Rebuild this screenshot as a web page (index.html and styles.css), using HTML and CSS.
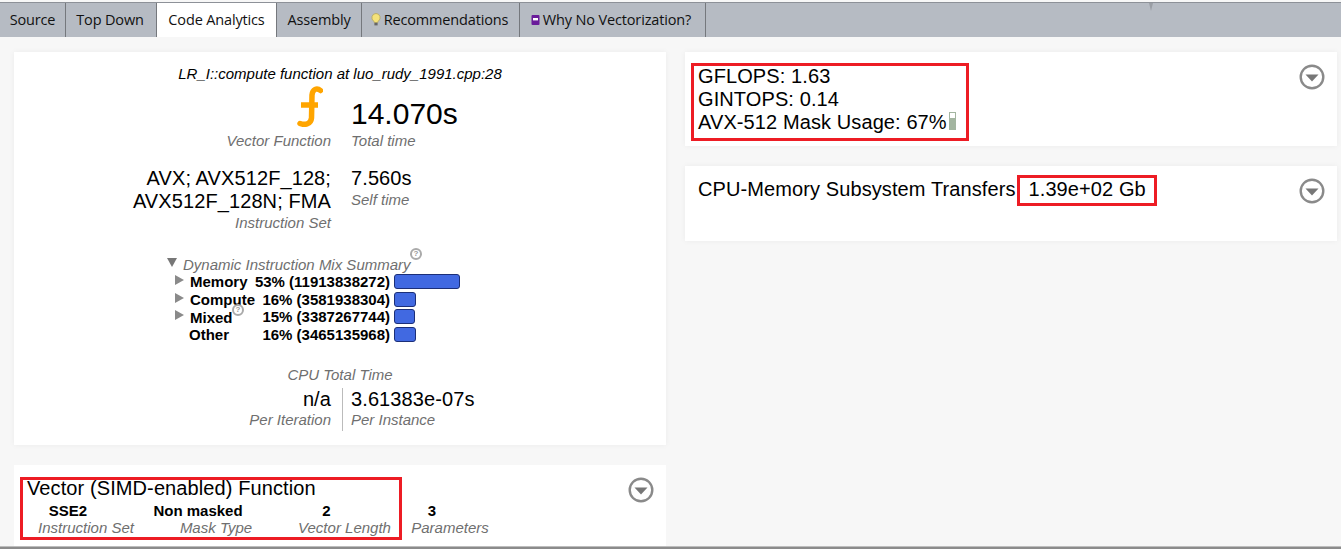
FILE: index.html
```html
<!DOCTYPE html>
<html lang="en">
<head>
<meta charset="utf-8">
<title>Code Analytics</title>
<link rel="stylesheet" href="styles.css">
</head>
<body>
<nav class="tabs">
  <div class="tab t1">Source</div>
  <div class="tab t2">Top Down</div>
  <div class="tab t3 active">Code Analytics</div>
  <div class="tab t4">Assembly</div>
  <div class="tab t5">
    <svg class="tab-icon" width="10" height="13" viewBox="0 0 10 13"><path d="M5 .5a4.2 4.2 0 0 0-2.4 7.6c.5.4.6.9.6 1.4h3.6c0-.5.1-1 .6-1.4A4.2 4.2 0 0 0 5 .5z" fill="#f4e27a" stroke="#b3a45a" stroke-width=".8"/><rect x="3.4" y="9.8" width="3.2" height="2.6" fill="#666"/></svg>
    Recommendations
  </div>
  <div class="tab t6">
    <svg class="tab-icon" width="9" height="12" viewBox="0 0 9 12"><rect x=".5" y="1" width="8" height="10" rx="1" fill="#6a1b9a"/><rect x="2" y="4" width="5" height="2.4" fill="#fff"/></svg>
    Why No Vectorization?
  </div>
  <span class="bar-notch"></span>
</nav>
<main class="main">
  <div class="col">
    <section class="card summary">
      <p class="title">LR_I::compute function at luo_rudy_1991.cpp:28</p>
      <div class="pair head-pair">
        <div class="left">
          <svg class="func-icon" width="26" height="41" viewBox="0 0 26 41"><path d="M23.5 4.5C20 1.5 15.5 3 15 9L14.5 32C14 38 8 39.5 3 37.5" fill="none" stroke="#ffa500" stroke-width="5.5" stroke-linecap="round"/><path d="M4 19H21" stroke="#ffa500" stroke-width="5.5"/></svg>
          <div class="lab">Vector Function</div>
        </div>
        <div class="right">
          <div class="big">14.070s</div>
          <div class="lab">Total time</div>
        </div>
      </div>
      <div class="pair set-pair">
        <div class="left">
          <div class="mid">AVX; AVX512F_128;<br>AVX512F_128N; FMA</div>
          <div class="lab">Instruction Set</div>
        </div>
        <div class="right">
          <div class="mid">7.560s</div>
          <div class="lab">Self time</div>
        </div>
      </div>
      <div class="mix">
        <div class="mix-head"><span class="tri-down"></span><span class="mix-title">Dynamic Instruction Mix Summary</span><span class="help help-a">?</span></div>
        <div class="mix-row"><span class="tri"></span><b class="name">Memory</b><b class="val">53% (11913838272)</b><span class="bar w-mem"></span></div>
        <div class="mix-row"><span class="tri"></span><b class="name">Compute</b><b class="val">16% (3581938304)</b><span class="bar w-cmp"></span></div>
        <div class="mix-row mixed"><span class="tri"></span><b class="name">Mixed</b><b class="val">15% (3387267744)</b><span class="bar w-mix"></span></div>
        <div class="mix-row"><span></span><b class="name other">Other</b><b class="val">16% (3465135968)</b><span class="bar w-cmp"></span></div>
        <span class="help help-b">?</span>
      </div>
      <div class="cpu-title lab">CPU Total Time</div>
      <div class="pair cpu-pair">
        <div class="left divider">
          <div class="mid">n/a</div>
          <div class="lab">Per Iteration</div>
        </div>
        <div class="right">
          <div class="mid">3.61383e-07s</div>
          <div class="lab">Per Instance</div>
        </div>
      </div>
    </section>
    <section class="card simd">
      <div class="mark simd-mark"></div>
      <svg class="chev" width="26" height="26" viewBox="0 0 26 26"><circle cx="13" cy="13" r="11.3" fill="none" stroke="#8a8a8a" stroke-width="2.4"/><path d="M6.5 10.5h13L13 17.5z" fill="#777"/></svg>
      <h2 class="heading">Vector (SIMD-enabled) Function</h2>
      <div class="params">
        <div class="param"><b>SSE2</b><span class="lab">Instruction Set</span></div>
        <div class="param"><b>Non masked</b><span class="lab">Mask Type</span></div>
        <div class="param"><b>2</b><span class="lab">Vector Length</span></div>
        <div class="param"><b>3</b><span class="lab">Parameters</span></div>
      </div>
    </section>
  </div>
  <div class="col">
    <section class="card metrics">
      <svg class="chev" width="26" height="26" viewBox="0 0 26 26"><circle cx="13" cy="13" r="11.3" fill="none" stroke="#8a8a8a" stroke-width="2.4"/><path d="M6.5 10.5h13L13 17.5z" fill="#777"/></svg>
      <div class="red-box stats">
        <div>GFLOPS: 1.63</div>
        <div>GINTOPS: 0.14</div>
        <div class="mask-line">AVX-512 Mask Usage: 67%<span class="gauge"><span class="gauge-empty"></span></span></div>
      </div>
    </section>
    <section class="card transfers">
      <svg class="chev" width="26" height="26" viewBox="0 0 26 26"><circle cx="13" cy="13" r="11.3" fill="none" stroke="#8a8a8a" stroke-width="2.4"/><path d="M6.5 10.5h13L13 17.5z" fill="#777"/></svg>
      <span class="tr-label">CPU-Memory Subsystem Transfers</span><span class="red-box tr-val">1.39e+02 Gb</span>
    </section>
  </div>
</main>
<div class="bottom-line"></div>
</body>
</html>
```
FILE: styles.css
```css
* { box-sizing: border-box; }
html, body { margin: 0; height: 549px; overflow: hidden; }
body {
  background: #f7f7f7;
  color: #000;
  font-family: "Liberation Sans", Arial, sans-serif;
  display: flex;
  flex-direction: column;
  padding-top: 2px;
}
.tabs {
  position: relative;
  height: 35px;
  flex: none;
  display: flex;
  background: #b6bbc3;
  border-top: 1px solid #8d9198;
  font-family: "Open Sans", sans-serif;
  font-size: 14.5px;
  letter-spacing: -.15px;
}
.bar-notch { position: absolute; left: 1149px; top: 0; border: 2px solid transparent; border-top: 8px solid #9a9ea5; border-bottom: 0; }
.tab {
  display: flex;
  align-items: center;
  justify-content: center;
  gap: 3px;
  border-right: 1px solid #75787d;
  height: 34px;
  color: #111;
  padding-bottom: 1px;
}
.t1 { width: 66px; }
.t2 { width: 91px; padding-right: 2px; }
.t3 { width: 120px; }
.t4 { width: 85px; }
.t5 { width: 158px; padding-right: 2px; }
.t6 { width: 186px; padding-right: 3px; }
.active { background: #fff; }
.main {
  flex: 1;
  display: grid;
  grid-template-columns: 652px 652px;
  column-gap: 19px;
  padding: 15px 0 0 14px;
  min-height: 0;
}
.col { display: flex; flex-direction: column; gap: 20px; min-height: 0; }
.card {
  position: relative;
  background: #fff;
  box-shadow: 0 0 6px rgba(0, 0, 0, .05);
}
.chev { position: absolute; right: 12px; top: 12px; }
.lab { font-size: 15px; line-height: 17px; font-style: italic; color: #6f6f6f; }

.summary { height: 393px; padding-top: 13px; flex: none; }
.title { margin: 0; font-size: 15px; line-height: 17px; font-style: italic; text-align: center; }
.pair { display: grid; grid-template-columns: 317px 1fr; column-gap: 20px; }
.left { text-align: right; }
.big { font-size: 30px; line-height: 34px; }
.mid { font-size: 20px; line-height: 23px; letter-spacing: .1px; }
.head-pair { margin-top: 4px; height: 74px; }
.func-icon { display: block; margin: 0 8px 5px auto; }
.head-pair .right { padding-top: 11px; }
.head-pair .right .lab { margin-top: 1px; }
.set-pair { margin-top: 7px; }
.set-pair .lab { margin-top: 1px; }
.mix { margin-top: 25px; margin-left: 153px; position: relative; width: 300px; }
.mix-head { display: flex; align-items: center; height: 17px; }
.tri-down { width: 0; height: 0; border: 5px solid transparent; border-top: 9px solid #777; border-bottom: 0; margin-right: 6px; margin-top: -5px; }
.mix-title { font-size: 15px; font-style: italic; color: #6f6f6f; }
.help {
  position: absolute;
  width: 12px; height: 12px;
  border-radius: 50%;
  border: 2px solid #aaa;
  color: #999;
  font: bold 8px/8px "Liberation Sans", sans-serif;
  text-align: center;
  background: rgba(255, 255, 255, .6);
}
.help-a { left: 243px; top: -8px; }
.help-b { left: 65px; top: 48px; }
.mix-row {
  display: grid;
  grid-template-columns: 9px 58px 136px auto;
  column-gap: 6px;
  align-items: center;
  height: 17.5px;
  margin-left: 8px;
  font-size: 15px;
  line-height: 17px;
  white-space: nowrap;
  justify-content: start;
}
.mix-row .tri { width: 0; height: 0; border: 5px solid transparent; border-left: 9px solid #8a8a8a; border-right: 0; margin-top: -3px; }
.name { position: relative; }
.mixed .name { top: 1px; }
.other { left: -1px; }
.val { text-align: right; }
.bar { display: block; height: 15px; background: #4169e1; border: 1px solid #1c2f78; border-radius: 3px; margin-left: -2px; }
.w-mem { width: 66px; }
.w-cmp { width: 22px; }
.w-mix { width: 21px; }
.cpu-title { margin-top: 23px; text-align: center; }
.cpu-pair { grid-template-columns: 329px 1fr; column-gap: 0; margin-top: 5px; }
.divider { border-right: 1px solid #bbb; padding-right: 11px; height: 43px; }
.cpu-pair .right { padding-left: 8px; }

.simd { flex: 1; padding: 12px 0 0 13px; box-shadow: none; overflow: hidden; }
.heading { margin: 0; font-size: 20px; font-weight: 400; line-height: 23px; letter-spacing: .1px; }
.params { display: grid; grid-template-columns: 96px 118px 139px 98px; margin-top: 2px; margin-left: 11px; }
.param { display: flex; flex-direction: column; align-items: center; white-space: nowrap; }
.param:nth-child(2), .param:nth-child(3) { margin-left: 46px; }
.param:nth-child(4) { margin-left: 20px; }
.param b { font-size: 15px; line-height: 17px; transform: translateX(-18px); }
.mark { position: absolute; border: 3px solid #ed1c24; }
.simd-mark { left: 6px; top: 12px; width: 382px; height: 63px; }

.red-box { border: 3px solid #ed1c24; }
.metrics { height: 94px; padding: 11px 0 0 6px; flex: none; }
.stats { width: 278px; height: 78px; padding: 0 0 0 4px; font-size: 20px; line-height: 23px; letter-spacing: .1px; }
.stats > div:first-child { margin-top: -1px; }
.mask-line { display: flex; align-items: center; }
.gauge { display: block; width: 7px; height: 18px; margin-left: 2px; margin-top: -4px; background: #a3b5a0; position: relative; }
.gauge-empty { display: block; position: absolute; left: 1px; top: 1px; width: 5px; height: 5px; background: #fff; }
.transfers { height: 75px; flex: none; padding: 9px 0 0 13px; font-size: 20px; line-height: 23px; letter-spacing: .1px; display: flex; align-items: flex-start; }
.tr-label { margin-top: 3px; }
.tr-val { margin-left: 1px; width: 140px; height: 31px; padding: 0 0 0 9px; line-height: 23px; white-space: nowrap; }
.bottom-line { flex: none; height: 3px; background: #8b8b8b; border-top: 1px solid #bdbdbd; }
```
